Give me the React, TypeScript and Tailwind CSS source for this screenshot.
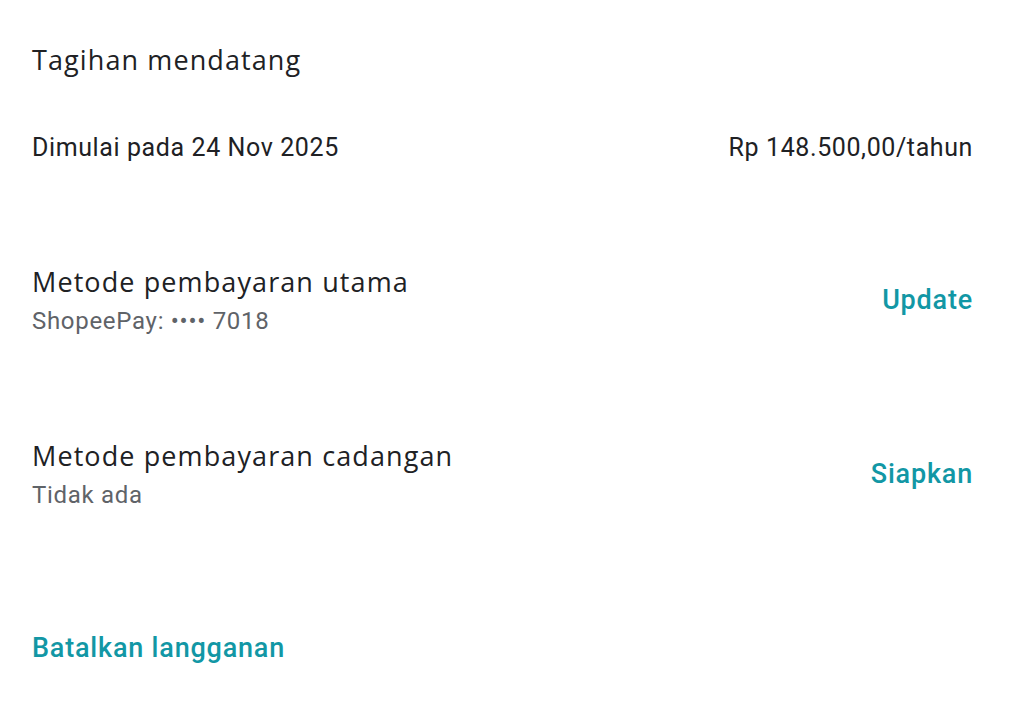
import React from "react";

const heading = "font-['Open_Sans',sans-serif] font-medium text-[27px] tracking-[1.1px] leading-[36px] text-[#202124]";
const body = "font-['Roboto',sans-serif] text-[25px] tracking-[0.6px] leading-[28px]";
const sub = "font-['Roboto',sans-serif] text-[24px] tracking-[0.7px] leading-[28px] text-[#5f6368]";
const link = "font-['Roboto',sans-serif] font-medium text-[27px] tracking-[0.8px] leading-[32px] text-[#1297a5]";

export default function App() {
  return (
    <div className="w-[1024px] h-[716px] bg-white pl-[32px] pr-[51px] pt-[42px] flex flex-col">
      <h2 className={heading}>Tagihan mendatang</h2>
      <div className={`mt-[56px] flex justify-between ${body} text-[#202124]`}>
        <span>Dimulai pada 24 Nov 2025</span>
        <span>Rp 148.500,00/tahun</span>
      </div>
      <div className="mt-[102px] flex items-center justify-between">
        <div className="flex flex-col">
          <div className={heading}>Metode pembayaran utama</div>
          <div className={`mt-[7px] ${sub}`}>ShopeePay: •••• 7018</div>
        </div>
        <button className={link}>Update</button>
      </div>
      <div className="mt-[103px] flex items-center justify-between">
        <div className="flex flex-col">
          <div className={heading}>Metode pembayaran cadangan</div>
          <div className={`mt-[7px] ${sub}`}>Tidak ada</div>
        </div>
        <button className={link}>Siapkan</button>
      </div>
      <div className="mt-[123px]">
        <button className={link}>Batalkan langganan</button>
      </div>
    </div>
  );
}
